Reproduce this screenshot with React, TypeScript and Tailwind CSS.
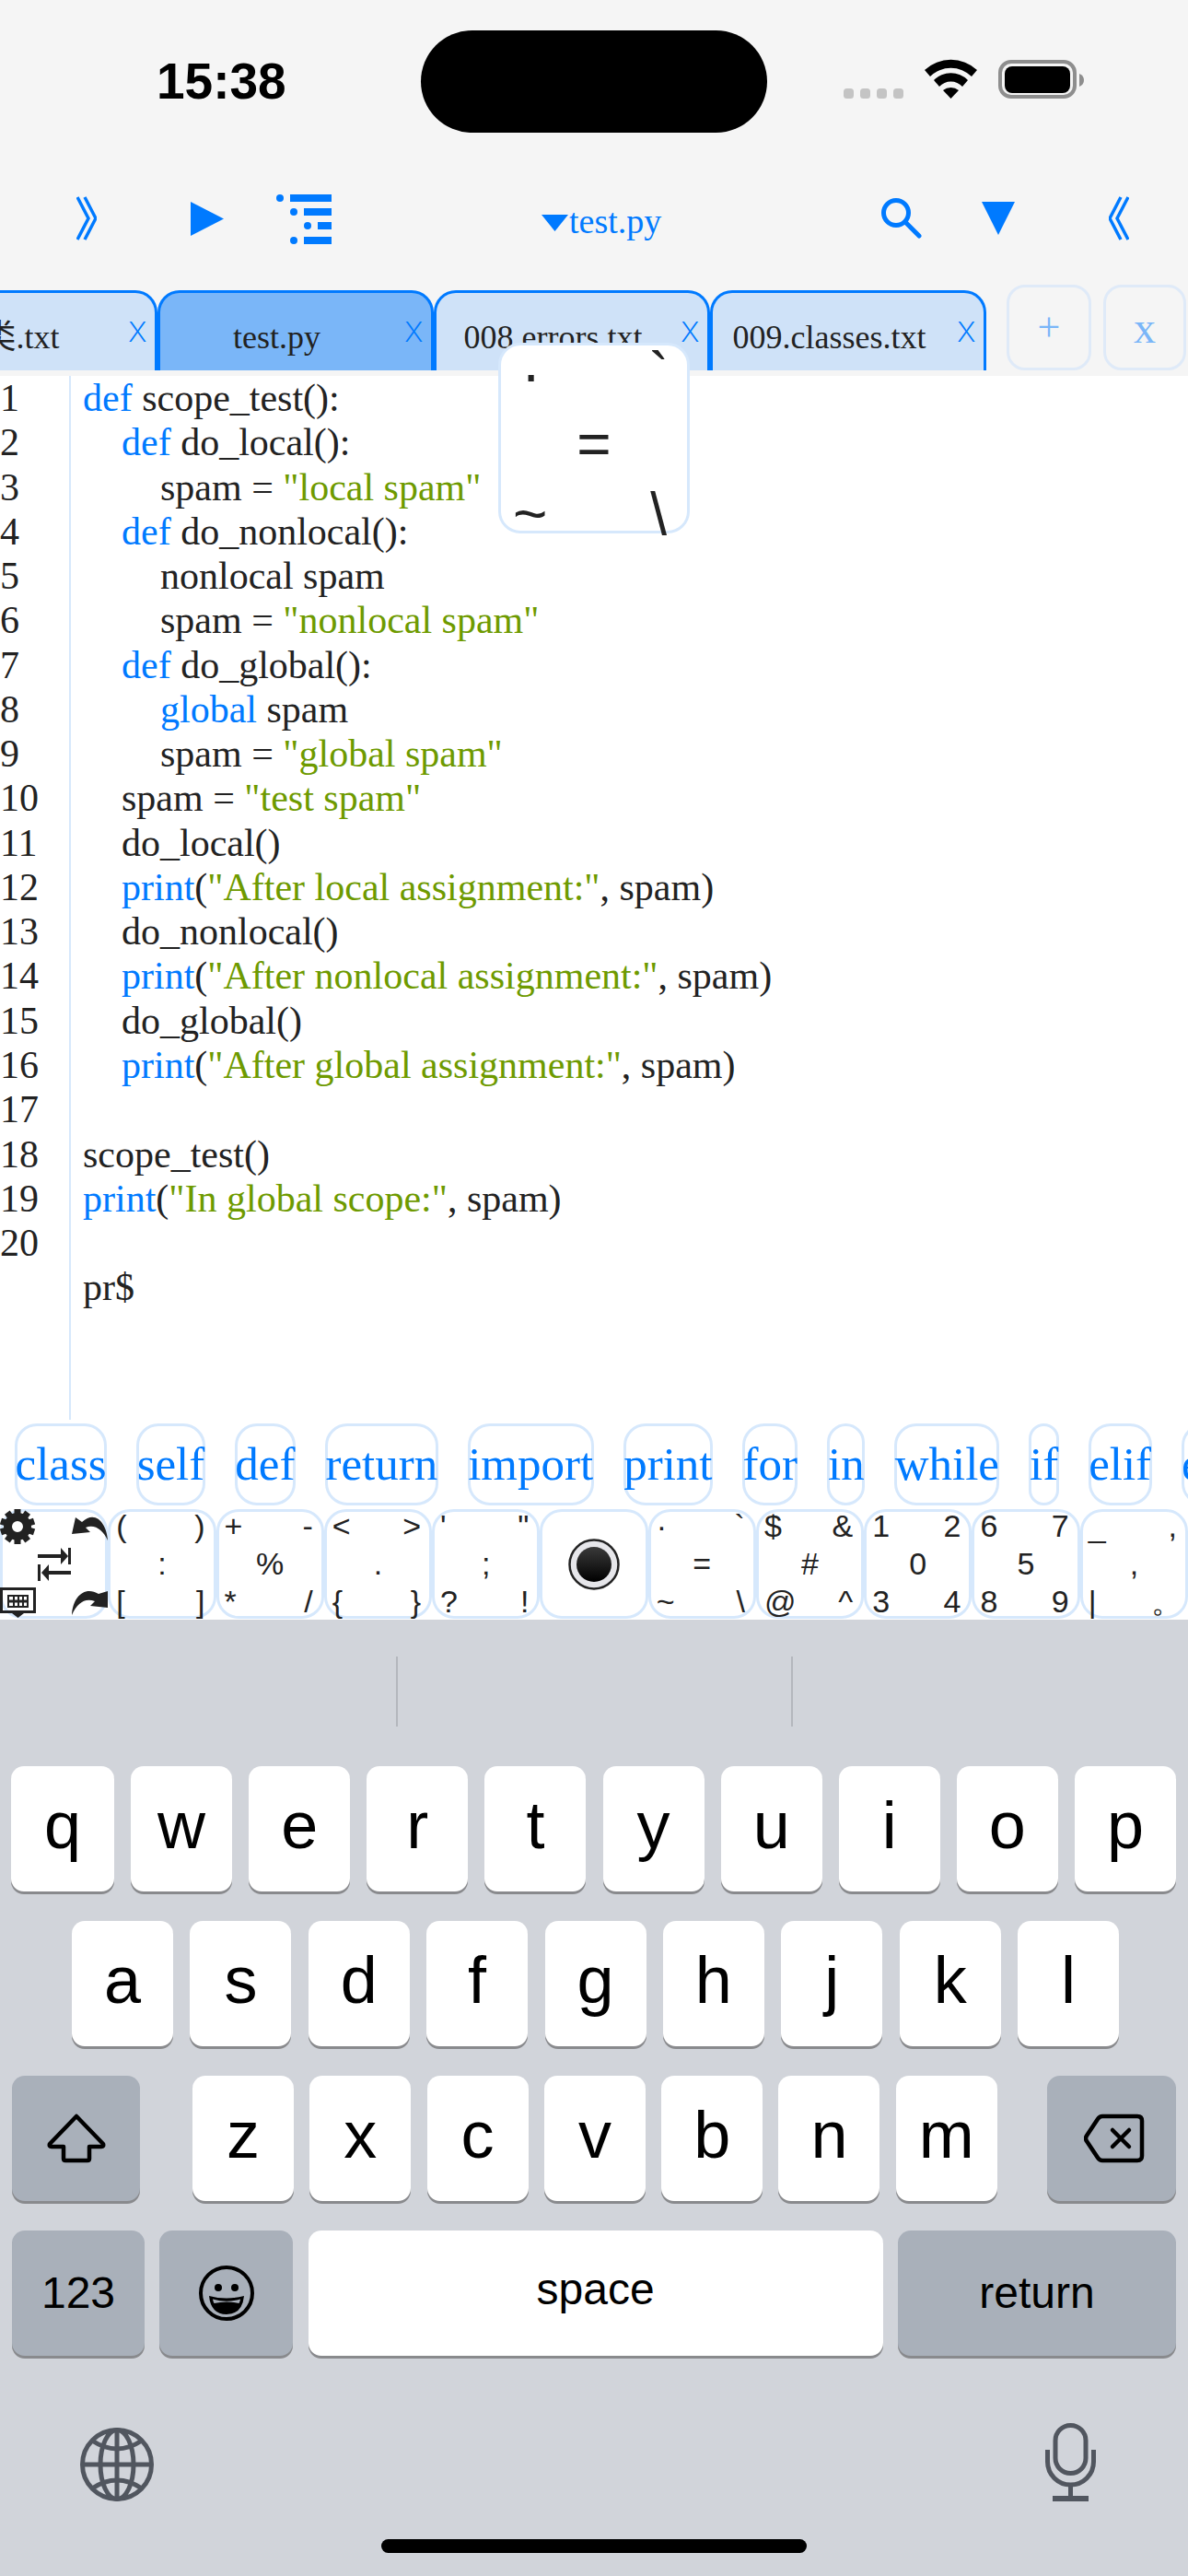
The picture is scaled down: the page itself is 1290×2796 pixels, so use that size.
import type { ReactNode } from 'react';

const serif = "[font-family:'Liberation_Serif','Noto_Sans_CJK_SC',serif]";
const sans = "[font-family:'Liberation_Sans',sans-serif]";

const K = ({ children }: { children: ReactNode }) => <span className="text-[#007aff]">{children}</span>;
const S = ({ children }: { children: ReactNode }) => <span className="text-[#6e9a00]">{children}</span>;

const codeLines: ReactNode[] = [
  <><K>def</K> scope_test():</>,
  <>    <K>def</K> do_local():</>,
  <>        spam = <S>"local spam"</S></>,
  <>    <K>def</K> do_nonlocal():</>,
  <>        nonlocal spam</>,
  <>        spam = <S>"nonlocal spam"</S></>,
  <>    <K>def</K> do_global():</>,
  <>        <K>global</K> spam</>,
  <>        spam = <S>"global spam"</S></>,
  <>    spam = <S>"test spam"</S></>,
  <>    do_local()</>,
  <>    <K>print</K>(<S>"After local assignment:"</S>, spam)</>,
  <>    do_nonlocal()</>,
  <>    <K>print</K>(<S>"After nonlocal assignment:"</S>, spam)</>,
  <>    do_global()</>,
  <>    <K>print</K>(<S>"After global assignment:"</S>, spam)</>,
  <> </>,
  <>scope_test()</>,
  <><K>print</K>(<S>"In global scope:"</S>, spam)</>,
  <> </>,
  <>pr$</>,
];

const keywords = ['class', 'self', 'def', 'return', 'import', 'print', 'for', 'in', 'while', 'if', 'elif', 'else'];

const symbolCells = [
  ['(', ')', ':', '[', ']'],
  ['+', '-', '%', '*', '/'],
  ['<', '>', '.', '{', '}'],
  ["'", '"', ';', '?', '!'],
  null,
  ['·', '`', '=', '~', '\\'],
  ['$', '&', '#', '@', '^'],
  ['1', '2', '0', '3', '4'],
  ['6', '7', '5', '8', '9'],
  ['_', ',', ',', '|', '。'],
];

function StatusIcons() {
  return (
    <svg width="261" height="111" viewBox="0 0 261 111">
      <g fill="#c4c4c4">
        <rect x="0" y="63" width="11" height="11" rx="3.5" />
        <rect x="18" y="63" width="11" height="11" rx="3.5" />
        <rect x="36" y="63" width="11" height="11" rx="3.5" />
        <rect x="54" y="63" width="11" height="11" rx="3.5" />
      </g>
      <g fill="black">
        <path d="M88 43 A42 42 0 0 1 145 43 L139 50 A32 32 0 0 0 94 50 Z" />
        <path d="M98 54 A26 26 0 0 1 135 54 L129 61 A17 17 0 0 0 104 61 Z" />
        <path d="M108 65 A14 14 0 0 1 125 65 L116.5 74 Z" />
      </g>
      <rect x="170" y="34" width="81" height="38" rx="12" fill="none" stroke="#8e8e8e" strokeWidth="4" />
      <rect x="175" y="39" width="71" height="29" rx="8" fill="black" />
      <path d="M256 47 Q261 49 261 54 Q261 59 256 61 Z" fill="#8e8e8e" />
    </svg>
  );
}

function Toolbar() {
  return (
    <div className="mt-[43px] flex h-[100px] items-center pl-[83px] text-[#007aff]">
      <svg width="22" height="48" viewBox="0 0 22 48" fill="none" stroke="#007aff" strokeWidth="3.5">
        <path d="M1 1 L13 24 L1 47" />
        <path d="M9 1 L21 24 L9 47" />
      </svg>
      <svg className="ml-[102px]" width="36" height="37" viewBox="0 0 36 37" fill="#007aff">
        <path d="M0 0 L36 18.5 L0 37 Z" />
      </svg>
      <svg className="ml-[57px] mt-[6px]" width="60" height="58" viewBox="0 0 60 58" fill="#007aff">
        <circle cx="4" cy="4" r="4" />
        <rect x="15" y="0" width="45" height="8" />
        <circle cx="19" cy="19" r="4" />
        <rect x="30" y="15" width="30" height="8" />
        <circle cx="34" cy="34" r="4" />
        <rect x="45" y="30" width="15" height="8" />
        <circle cx="19" cy="50" r="4" />
        <rect x="30" y="46" width="30" height="8" />
      </svg>
      <div className={`ml-[228px] flex w-[369px] items-center pt-[6px] text-[38px] ${serif}`}>
        <svg className="mr-[1px] mt-[4px]" width="29" height="18" viewBox="0 0 29 18" fill="#007aff">
          <path d="M0 0 H29 L14.5 18 Z" />
        </svg>
        <span>test.py</span>
      </div>
      <svg width="44" height="44" viewBox="0 0 44 44" fill="none" stroke="#007aff" strokeWidth="5">
        <circle cx="16" cy="16" r="13.5" />
        <path d="M26 26 L41 41" strokeLinecap="round" />
      </svg>
      <svg className="ml-[65px]" width="36" height="36" viewBox="0 0 36 36" fill="#007aff">
        <path d="M0 0 H36 L18 36 Z" />
      </svg>
      <svg className="ml-[102px]" width="22" height="48" viewBox="0 0 22 48" fill="none" stroke="#007aff" strokeWidth="3.5">
        <path d="M13 1 L1 24 L13 47" />
        <path d="M21 1 L9 24 L21 47" />
      </svg>
    </div>
  );
}

function Tab({ name, active }: { name: string; active?: boolean }) {
  return (
    <div
      className={`flex h-[87px] w-[300px] shrink-0 rounded-t-[24px] border-x-[3px] border-t-[3px] border-[#007aff] ${
        active ? 'bg-[#7ab6f8]' : 'bg-[#cfe2f8]'
      }`}
    >
      <div className={`min-w-0 flex-1 pt-[28px] text-center text-[36px] leading-[41px] whitespace-nowrap text-[#222] ${serif}`}>{name}</div>
      <div className="w-[41px] shrink-0 pl-[12px] pt-[18px] font-['Inter'] text-[40px] leading-[41px] font-extralight text-[#007aff]">x</div>
    </div>
  );
}

function Tabs() {
  return (
    <div className="mt-[22px] flex h-[99px] items-start overflow-hidden">
      <div className="-ml-[129px] mt-[6px] flex">
        <Tab name="07.类.txt" />
        <Tab name="test.py" active />
        <Tab name="008.errors.txt" />
        <Tab name="009.classes.txt" />
      </div>
      <div className={`ml-[22px] flex h-[93px] w-[92px] shrink-0 items-center justify-center rounded-[20px] border-[3px] border-[#dfeaf8] text-[44px] text-[#7ab6f8] ${serif}`}>+</div>
      <div className={`ml-[13px] flex h-[93px] w-[90px] shrink-0 items-center justify-center rounded-[20px] border-[3px] border-[#dfeaf8] text-[48px] text-[#7ab6f8] ${serif}`}>x</div>
    </div>
  );
}

function ToolIcons() {
  const teeth = [0, 36, 72, 108, 144, 180, 216, 252, 288, 324];
  return (
    <svg className="-m-[3px] shrink-0 overflow-visible" width="117" height="119" viewBox="0 0 117 119" fill="#222">
      {teeth.map(a => (
        <rect key={a} x="15.5" y="0" width="7" height="7" transform={`rotate(${a} 19 19)`} />
      ))}
      <circle cx="19" cy="19" r="10.5" fill="none" stroke="#222" strokeWidth="9" />
      <path d="M82 9 L78 27 L98 25 L93 20 C103 16 112 23 117 34 C116 16 104 0 89 14 Z" />
      <path d="M41 49 H66 V42 L74 51 L66 60 V53 H41 Z" />
      <rect x="74" y="42" width="3" height="18" />
      <rect x="41" y="60" width="3" height="18" />
      <path d="M77 67 H53 V60 L45 69 L53 78 V71 H77 Z" />
      <path d="M78 115 C79 95 92 83 107 92 L117 89 L117 107 L98 105 L103 100 C92 96 84 102 78 115 Z" />
      <path fillRule="evenodd" d="M0 85 H39 V113 H26 L19.5 118 L13 113 H0 Z M3 88 V110 H36 V88 Z" />
      <path d="M8 93 H31 V107 H8 Z M10 95 V98.5 H14 V95 Z M16 95 V98.5 H19 V95 Z M21 95 V98.5 H24 V95 Z M26 95 V98.5 H29 V95 Z M10 101.5 V105 H14 V101.5 Z M16 101.5 V105 H19 V101.5 Z M21 101.5 V105 H24 V101.5 Z M26 101.5 V105 H29 V101.5 Z" fillRule="evenodd" />
    </svg>
  );
}

function Ball() {
  return (
    <svg width="56" height="56" viewBox="0 0 56 56">
      <defs>
        <linearGradient id="ballFill" x1="0" y1="0" x2="0" y2="1">
          <stop offset="0" stopColor="#3a3a3a" />
          <stop offset="1" stopColor="#000" />
        </linearGradient>
      </defs>
      <circle cx="28" cy="28" r="26.5" fill="#e6e6ea" stroke="#222" strokeWidth="2.5" />
      <circle cx="28" cy="28" r="19" fill="url(#ballFill)" />
    </svg>
  );
}

function SymbolGlyphs({ glyphs }: { glyphs: string[] }) {
  const [tl, tr, c, bl, br] = glyphs;
  return (
    <div className={`grid h-full w-full grid-cols-3 grid-rows-[41px_41px_41px] content-center text-[34px] leading-[41px] text-[#222] ${sans}`}>
      <span className="pl-[6px] text-left">{tl}</span>
      <span />
      <span className="pr-[9px] text-right">{tr}</span>
      <span />
      <span className="text-center">{c}</span>
      <span />
      <span className="pl-[6px] text-left">{bl}</span>
      <span />
      <span className="pr-[9px] text-right">{br}</span>
    </div>
  );
}

function Editor() {
  return (
    <div className={`flex h-[1133px] bg-white text-[42px] leading-[48.27px] text-[#222] ${serif}`}>
      <div className="w-[77px] shrink-0 border-r-2 border-[#d6e8fc]">
        {Array.from({ length: 20 }, (_, i) => (
          <div key={i}>{i + 1}</div>
        ))}
      </div>
      <div className="pl-[13px] whitespace-pre">
        {codeLines.map((line, i) => (
          <div key={i}>{line}</div>
        ))}
      </div>
    </div>
  );
}

function Popup() {
  return (
    <div className={`absolute left-[541px] top-[372px] z-10 grid h-[207px] w-[208px] grid-cols-3 grid-rows-[76px_76px_70px] content-center rounded-[24px] border-[3px] border-[#d6e8fc] bg-white pt-[6px] text-[64px] leading-[76px] text-[#222] ${sans}`}>
      <span className="pl-[22px] text-left">·</span>
      <span />
      <span className="pr-[20px] text-right">`</span>
      <span />
      <span className="text-center">=</span>
      <span />
      <span className="pl-[13px] text-left">~</span>
      <span />
      <span className="pr-[22px] text-right">\</span>
    </div>
  );
}

function Key({ children, className = '' }: { children: ReactNode; className?: string }) {
  return (
    <div className={`flex h-[136px] shrink-0 items-center justify-center rounded-[14px] shadow-[0_3px_0_#898a8d] ${className}`}>
      {children}
    </div>
  );
}

function Letter({ ch, className = 'w-[110px]' }: { ch: string; className?: string }) {
  return <Key className={`${className} bg-white pb-[9px] text-[72px] text-black`}>{ch}</Key>;
}

function Keyboard() {
  return (
    <div className={`flex h-[1038px] flex-col bg-[#d1d4da] ${sans}`}>
      <div className="mt-[40px] flex justify-center">
        <div className="h-[76px] w-[431px] border-x-2 border-[#b4b7bd]" />
      </div>
      <div className="mt-[43px] flex flex-col gap-[32px]">
        <div className="flex justify-between pl-[12px] pr-[13px]">
          <Letter ch="q" className="w-[112px]" />
          {'wertyuiop'.split('').map(c => <Letter key={c} ch={c} />)}
        </div>
        <div className="flex justify-between pl-[78px] pr-[75px]">
          {'asdfghjkl'.split('').map(c => <Letter key={c} ch={c} />)}
        </div>
        <div className="flex px-[13px]">
          <Key className="w-[139px] bg-[#a9b0ba]">
            <svg width="64" height="54" viewBox="0 0 64 54" fill="none" stroke="black" strokeWidth="4.5" strokeLinejoin="round">
              <path d="M32 3 L61 33 Q62 36 59 36 H46 V49 Q46 51 44 51 H20 Q18 51 18 49 V36 H5 Q2 36 3 33 Z" />
            </svg>
          </Key>
          <div className="ml-[57px] flex gap-[17.3px]">
            {'zxcvbnm'.split('').map(c => <Letter key={c} ch={c} />)}
          </div>
          <Key className="ml-auto w-[140px] bg-[#a9b0ba] pl-[6px]">
            <svg width="66" height="54" viewBox="0 0 66 54" fill="none" stroke="black" strokeWidth="4.5" strokeLinejoin="round" strokeLinecap="round">
              <path d="M20 3 H58 Q63 3 63 8 V46 Q63 51 58 51 H20 Q17 51 15 48 L3 30 Q1 27 3 24 L15 6 Q17 3 20 3 Z" />
              <path d="M31 18 L49 36 M49 18 L31 36" />
            </svg>
          </Key>
        </div>
        <div className="flex justify-between px-[13px] text-[48px] text-black">
          <Key className="w-[144px] bg-[#a9b0ba]">123</Key>
          <Key className="w-[145px] bg-[#a9b0ba]">
            <svg width="60" height="60" viewBox="0 0 60 60" fill="none">
              <circle cx="30" cy="30" r="28" stroke="black" strokeWidth="4" />
              <circle cx="21" cy="24" r="4" fill="black" />
              <circle cx="39" cy="24" r="4" fill="black" />
              <path d="M11 33 Q30 38 49 33 Q47 53 30 53 Q13 53 11 33 Z" fill="black" />
              <path d="M15 36.5 Q30 41 45 36.5 Q44.5 39.5 43.5 41 Q30 38 16.5 41 Q15.5 39.5 15 36.5 Z" fill="#a9b0ba" />
            </svg>
          </Key>
          <Key className="w-[624px] bg-white pb-[8px]">space</Key>
          <Key className="w-[302px] bg-[#a9b0ba]">return</Key>
        </div>
      </div>
      <div className="mt-[73px] flex items-start justify-between pl-[87px] pr-[100px]">
        <svg className="mt-[5px]" width="80" height="80" viewBox="0 0 80 80" fill="none" stroke="#51565f" strokeWidth="5">
          <circle cx="40" cy="40" r="37.5" />
          <ellipse cx="40" cy="40" rx="18" ry="37.5" />
          <path d="M40 2 V78 M2 40 H78" />
          <path d="M13 14 Q40 32 67 14 M13 66 Q40 48 67 66" />
        </svg>
        <svg width="55" height="85" viewBox="0 0 55 85" fill="none" stroke="#51565f" strokeWidth="5">
          <rect x="11" y="2.5" width="33" height="52" rx="16.5" />
          <path d="M2.5 29 V42 A25 25 0 0 0 52.5 42 V29" />
          <path d="M27.5 67 V82" />
          <path d="M8 82 H47" strokeWidth="6" />
        </svg>
      </div>
      <div className="mx-auto mt-[41px] h-[15px] w-[462px] rounded-full bg-black" />
    </div>
  );
}

export default function App() {
  return (
    <div className="relative h-[2796px] w-[1290px] overflow-hidden bg-[#f5f5f5]">
      <div className={`flex h-[144px] items-start pl-[170px] pt-[33px] ${sans}`}>
        <div className="flex h-[111px] w-[287px] items-center text-[55px] font-bold text-black">15:38</div>
        <div className="h-[111px] w-[376px] rounded-[56px] bg-black" />
        <div className="ml-[83px]">
          <StatusIcons />
        </div>
      </div>
      <Toolbar />
      <Tabs />
      <Popup />
      <Editor />
      <div className="flex h-[97px] items-start gap-[32px] overflow-hidden bg-white pl-[16px] pt-[4px]">
        {keywords.map(w => (
          <div key={w} className={`flex h-[89px] shrink-0 items-center rounded-[24px] border-[3px] border-[#d6e8fc] text-[51px] text-[#007aff] ${serif}`}>
            <span className="-mx-[2.5px]">{w}</span>
          </div>
        ))}
      </div>
      <div className="grid h-[120px] grid-cols-11 bg-white">
        <div className="flex h-[119px] rounded-[24px] border-[3px] border-[#d6e8fc]">
          <ToolIcons />
        </div>
        {symbolCells.map((cell, i) => (
          <div key={i} className="flex h-[119px] items-center justify-center rounded-[24px] border-[3px] border-[#d6e8fc]">
            {cell ? <SymbolGlyphs glyphs={cell} /> : <Ball />}
          </div>
        ))}
      </div>
      <Keyboard />
    </div>
  );
}
